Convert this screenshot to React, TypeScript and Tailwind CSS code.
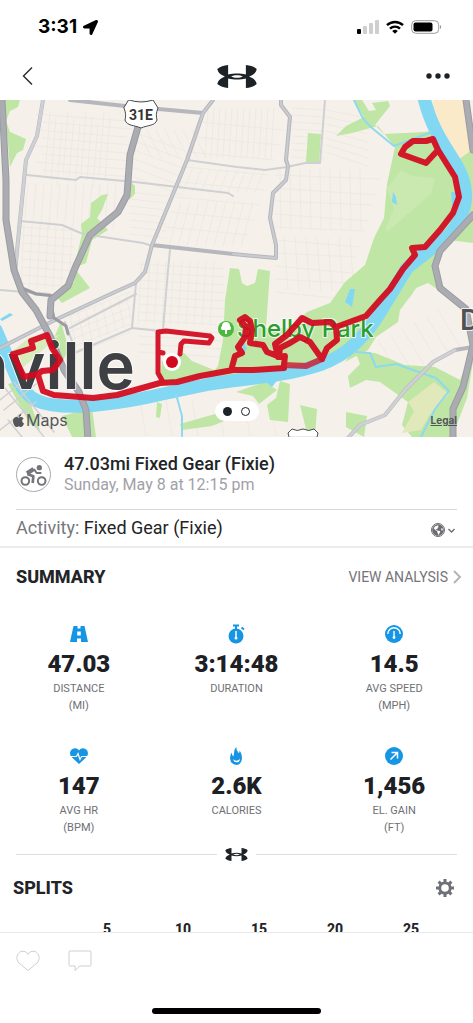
import { ReactNode } from "react";
import { FaApple, FaGlobeAmericas, FaLocationArrow } from "react-icons/fa";

type Stat = {
  icon: ReactNode;
  value: string;
  label: string;
  unit?: string;
};

const SPLIT_TICKS = [5, 10, 15, 20, 25];

// side streets of the east side grid, generated so the path list stays short
const SIDE_STREETS = [
  ...Array.from({ length: 11 }, (_, i) => `M${50 + i * 6} ${12 + (i % 3) * 6}l-5 62`),
  ...Array.from({ length: 8 }, (_, i) => `M${36 + (i % 2) * 6} ${14 + i * 8}l90 7`),
  ...Array.from({ length: 12 }, (_, i) => `M${28 + i * 8} 84l-3 ${34 + (i % 4) * 4}`),
  ...Array.from({ length: 8 }, (_, i) => `M${22} ${127 + i * 8}l52 4`),
  ...Array.from({ length: 7 }, (_, i) => `M${24 + i * 8} 125l-3 64`),
  ...Array.from({ length: 7 }, (_, i) => `M${138 + i * 9} 30l14 28`),
  ...Array.from({ length: 6 }, (_, i) => `M134 ${32 + i * 9}l48 18`),
  ...Array.from({ length: 7 }, (_, i) => `M130 ${92 + i * 7}l36 4`),
  ...Array.from({ length: 9 }, (_, i) => `M${192 + i * 9} 70l-9 22m-2 10l-12 44`),
  ...Array.from({ length: 8 }, (_, i) => `M${200 - i * 5} ${22 + i * 15}l84 8`),
  ...Array.from({ length: 12 }, (_, i) => `M${208 + i * 6} 8l-3 50`),
  ...Array.from({ length: 9 }, (_, i) => `M${280 + i * 10} 70l1 60`),
  ...Array.from({ length: 10 }, (_, i) => `M275 ${75 + i * 13}l${105 - i * 4} ${4 + (i % 2) * 3}`),
  ...Array.from({ length: 7 }, (_, i) => `M${284 + i * 11} 138l4 52`),
  ...Array.from({ length: 8 }, (_, i) => `M292 ${8 + i * 7}l32 2`),
  ...Array.from({ length: 7 }, (_, i) => `M${326} ${10 + i * 7}l42 ${8 + i}`),
  ...Array.from({ length: 10 }, (_, i) => `M${142 + i * 8} 162l-4 62`),
  ...Array.from({ length: 12 }, (_, i) => `M138 ${164 + i * 8}l86 5`),
  ...Array.from({ length: 8 }, (_, i) => `M${70 + i * 8} ${216 - i * 3}l6 30`),
  ...Array.from({ length: 6 }, (_, i) => `M70 ${256 - i * 8}l60 -24`),
  ...Array.from({ length: 6 }, (_, i) => `M${140 + i * 26} 300l6 36`),
  ...Array.from({ length: 6 }, (_, i) => `M${378 + i * 12} ${240 - i * 6}l24 40`),
].join("");

function ArmourLogo({ className }: { className?: string }) {
  return (
    <svg viewBox="0 0 120 70" className={className} fill="#1d2226" aria-hidden="true">
      <path
        fillRule="evenodd"
        d="M33 0C20 1 8 5 0 12c2 11 10 18 22 22v2C10 40 3 46 0 58c8 7 20 11 33 12V41c8 2 18 3 27 3s19-1 27-3v29c13-1 25-5 33-12-3-12-10-18-22-22v-2c12-4 20-11 22-22C112 5 100 1 87 0v29c-8-2-18-3-27-3s-19 1-27 3zm9 35c5-3 11-4 18-4s13 1 18 4c-5 3-11 4-18 4s-13-1-18-4z"
      />
    </svg>
  );
}

function StatusBar() {
  return (
    <div className="flex h-[50px] items-center justify-between pr-[31px] pl-[38px] pt-1">
      <div className="flex items-center gap-1.5">
        <span className="font-[Inter] text-[19px] font-bold">3:31</span>
        <FaLocationArrow className="size-[15px]" />
      </div>
      <div className="flex items-center gap-[7px]">
        <svg viewBox="0 0 22 14" className="h-[14px] w-[22px]">
          <rect x="0" y="9" width="4" height="5" rx="1" fill="#000" />
          <rect x="6" y="6" width="4" height="8" rx="1" fill="#cfcfcf" />
          <rect x="12" y="3" width="4" height="11" rx="1" fill="#cfcfcf" />
          <rect x="18" y="0" width="4" height="14" rx="1" fill="#cfcfcf" />
        </svg>
        <svg viewBox="0 0 18 14" className="h-[14px] w-[18px]" fill="none" stroke="#000" strokeWidth="2.4">
          <path d="M1 5.2a11.5 11.5 0 0 1 16 0" />
          <path d="M4 8.6a7.2 7.2 0 0 1 10 0" />
          <path d="M6.2 11a4 4 0 0 1 5.6 0L9 13.8z" fill="#000" stroke="none" />
        </svg>
        <svg viewBox="0 0 31 14" className="h-[14px] w-[31px]">
          <rect x=".7" y=".7" width="27" height="12.6" rx="4" fill="#fff" stroke="#9b9b9b" />
          <rect x="2.5" y="2.5" width="19" height="9" rx="2" />
          <path d="M29 5c1.5.4 1.5 3.6 0 4z" fill="#9b9b9b" />
        </svg>
      </div>
    </div>
  );
}

function NavBar() {
  return (
    <header className="grid h-[50px] grid-cols-3 items-center px-[22px] pt-0.5">
      <button aria-label="Back" className="justify-self-start">
        <svg viewBox="0 0 11 20" className="h-5 w-[11px]" fill="none" stroke="#26292c" strokeWidth="1.4">
          <path d="M10 1.5L1.5 10l8.5 8.5" />
        </svg>
      </button>
      <ArmourLogo className="h-[23px] w-10 justify-self-center" />
      <button aria-label="More options" className="justify-self-end">
        <svg viewBox="0 0 26 6" className="h-[6px] w-[26px]" fill="#1d2226">
          <circle cx="4" cy="3" r="2.7" />
          <circle cx="13" cy="3" r="2.7" />
          <circle cx="22" cy="3" r="2.7" />
        </svg>
      </button>
    </header>
  );
}

function RouteMap() {
  return (
    <svg
      viewBox="0 0 473 337"
      preserveAspectRatio="xMidYMid slice"
      className="block h-[337px] w-full"
      role="img"
      aria-label="Route map"
      fill="none"
      strokeLinejoin="round"
      strokeLinecap="round"
    >
      <rect width="473" height="337" fill="#f5f1ea" />
      <path d={SIDE_STREETS} stroke="#ebe7e1" strokeWidth="1" opacity=".8" />

      {/* parks */}
      <g fill="#bfe6a4">
        <path d="M4 0h16l-2 7-8 4-4 10 4 11 16 7-3 11-6 3-7 14z" />
        <path d="M102 95L108 94L102 110L97 118L108 130L92 140L86 163L74 168L82 134L81 124L90 117L91 103z" />
        <path d="M131 82l4 4v8l-6 6z" />
        <path d="M76 170L90 188L62 203L56 196L74 182zM61 222l8 28-6 10-10-20z" />
        <path d="M353 0L362 0L369 11L376 10L372 3L388 1L390 6L375 25L384 34L425 32L436 30L450 52L466 90L464 116L446 138L404 172L376 222L340 258L290 275L205 282L218 266L223 240L225 200L230 168L239 169L242 183L247 186L255 183L258 169L270 171L266 228L290 228L307 212L330 203L345 182L365 165L374 138L384 118L387 84L395 47L378 26L352 33L336 36L346 26L364 17z" />
        <path d="M160 283l2-22 22-8 8 8 22 9v6zM308 33l13 1-2 29-13-1z" />
        <path d="M459 55L473 45V143L448 140L428 168L412 194L400 210L398 222L376 237L368 250L345 262L375 220L410 170L455 135L466 110z" />
        <path d="M428 165L436 160L438 180L448 192L440 191L428 183L416 188L408 200z" />
        <path d="M355 251L375 253L405 265L435 267L460 280L468 260L473 262L467 298L452 337H412L402 325L408 302L380 282L366 280L350 288L348 276L360 264z" />
        <path d="M280 281l10 3-2 38-18-2-3-15 9-7zM300 305l17 4-2 28h-7zM346 312l21 4-3 21-18-10zM236 292l29-10 12 8-18 14-6-8zM157 302l5 2-2 14-4-1zM180 324l42-12 20 2-30 12-30 4zM62 316l30-8 4 29H72zM8 284l14-4 18 50-10-6z" />
      </g>
      <path d="M387 88l14-18 12 6 22 2-4 16-44 38-2-3 9-20z" fill="#cae9b1" />
      <path d="M433 0h30l9 50-14 10-8-14-17-30z" fill="#faeaca" />
      <path d="M408 302l26-20 15 12-20 22-8 14-19 3 12-22z" fill="#e1e9bb" />
      <path d="M20 270l40-35-30 2-20 16zM12 305l40 12" fill="#d8ebbb" />

      {/* river, lakes and creeks */}
      <path
        d="M424 -2C432 30 444 44 457 66C472 92 466 114 450 134L407 168L376 219C360 242 344 256 322 264C280 278 244 278 210 284C160 294 126 304 84 306C40 308 26 300 16 276C8 258 2 244 -4 230"
        stroke="#82d7f3"
        strokeWidth="13"
      />
      <path d="M0 219l10-6 3 2-11 6z" fill="#82d7f3" />
      <path d="M451 92h8l-2 14h-5zM393 92l3 5 1 8-5-3zM350 189h5l-3 18-7-5zM264 281l14-2-6 8zM243 242l4 6-4 6z" fill="#82d7f3" />
      <path d="M356 252l14 1 6 14 20-3 40 14 13 13-14 18-15 30" stroke="#8ed9ee" strokeWidth="2" />
      <path d="M354 0c6 12 8 20 18 28l22 18 38-14M176 294l6 22v20" stroke="#8ed9ee" strokeWidth="2" />

      {/* secondary roads */}
      <g stroke="#d0d0d3" strokeWidth="2">
        <path d="M27 75l49 5 4-3 55 5 93 11 5 3M20 121l42 4 21 9 60 9 9 3M187 60l50 7 28 3 22-3 18-4h15l5-63M170 150l-2 20-5 60M136 183l-4 45 28 3M132 228l-60 26M65 222l8 22M0 190l50 4M70 228l66-34" />
        <path d="M0 300l30-24M4 310l32-26M8 320l14 17M0 282l44 55M14 282l40 50M0 330l36-28" strokeWidth="1.5" />
      </g>
      <g>
        <path d="M70 0l55 6 78 7M43 0l-6 36-11 24-6 60-5 52M213 0l-10 13-16 47-35 85-7 27-10 11-20 9-60 28-55 28M152 145l81 9 43 4v-13l-6-27 3-25 13-13 2-14-2-6 4-43-9-12v-5M473 247l-18 3-22 12-28 28-20 25-25 10-13 14" stroke="#b5b7bd" strokeWidth="4" />
        <path d="M43 0l-6 36-11 24-6 60-5 52M455 250l-22 12-28 28-20 25-25 10-13 14" stroke="#ced0d3" strokeWidth="3" />
        <path d="M213 0l-10 13-16 47-35 85-7 27-10 11-20 9-60 28-55 28M233 154l43 4v-13l-6-27 3-25 13-13 2-14-2-6 4-43-9-12v-5" stroke="#cacbd0" strokeWidth="2" />
      </g>

      {/* highways */}
      <g stroke="#9a9ca2" strokeWidth="7">
        <path d="M2 0l4 80v40l8 50 8 22 14 18 14 26 14 34 15 22 7 18 2 30" />
        <path d="M138 27l-8 28-3 40-9 17-28 23-15 33-7 18-17 14-1 16" />
        <path d="M22 188l14 6 18 2M50 200l4 18 12 8 2 8" strokeWidth="3" />
        <path d="M466 0l7 50M473 115l-33 36-5 15 5 22 26 21 7 36-10 42-10 22v28" />
      </g>
      <g stroke="#aaacb2" strokeWidth="5">
        <path d="M2 0l4 80v40l8 50 8 22 14 18 14 26 14 34 15 22 7 18 2 30" />
        <path d="M138 27l-8 28-3 40-9 17-28 23-15 33-7 18-17 14-1 16" />
        <path d="M466 0l7 50M473 115l-33 36-5 15 5 22 26 21 7 36-10 42-10 22v28" />
      </g>

      {/* shields */}
      <path d="M129 0q12 4 24 0l5 8c-2 5-2 8-1 12-2 6-9 5-16 8-7-3-14-2-16-8 1-4 1-7-1-12z" fill="#fff" stroke="#4b4b4d" />
      <text x="141" y="20" textAnchor="middle" fill="#333436" fontFamily="Roboto, sans-serif" fontSize="14" fontWeight="700">
        31E
      </text>
      <path d="M289 337l-1-4 4-4q5 3 11 0 6 3 11 0l4 4-1 4z" fill="#fff" stroke="#4b4b4d" />

      {/* place names */}
      <g fontFamily="Inter, sans-serif" stroke="#fff" strokeOpacity=".8" paintOrder="stroke">
        <text x="135" y="289" textAnchor="end" fontSize="65" fontWeight="600" fill="#3f4043" strokeWidth="2">
          Nashville
        </text>
        <text x="237" y="237" fontSize="24" fontWeight="500" fill="#2b9d30" strokeWidth="2">
          Shelby Park
        </text>
        <text x="460" y="230" fontSize="28" fontWeight="600" fill="#505154" strokeWidth="2">
          D
        </text>
      </g>
      <circle cx="226" cy="229" r="8" fill="#4db83f" />
      <path d="M225 234v-4h-3a2.5 2.5 0 0 1 0-4 4 4 0 0 1 8 0 2.5 2.5 0 0 1 0 4h-3v4z" fill="#fff" />

      {/* ride */}
      <g stroke="#d3091f" strokeWidth="6" opacity=".93">
        <path d="M38 275l5 16 11 4 39 3 24-3 43-12 17-1 23-6 33-6 20 0 31-2" />
        <path d="M38 274L24 277L13 254L33 248L31 241L47 235L52 248L60 260L53 270L42 271z" />
        <path d="M163 282l-5-9V232l8-1 44 5 2 2-3 5-25-2-3 3-1 10M158 252l5 1" strokeWidth="5" />
        <path d="M284 265l22 1 16-7" strokeOpacity=".8" />
        <path d="M232 267L235 256L242 253L238 247L245 237L246 227L240 220L245 217L250 221L252 230L250 243L263 245L267 252L280 257L285 256L284 265M278 257L275 244L287 235L302 218L312 223L330 222L336 227L337 240L327 248L322 259L310 242L300 237L290 243L280 248L279 257" />
        <path d="M336 227L355 220L366 216L380 200L390 189L403 169L415 155L412 148L425 147L440 130L453 113L459 97L455 77L438 50L433 39L426 41L413 41L405 47L401 54L426 63L438 50" />
      </g>
      <circle cx="172" cy="262" r="9" fill="#fff" />
      <circle cx="172" cy="262" r="6" fill="#d3091f" />
    </svg>
  );
}

function MapCard() {
  return (
    <section className="relative">
      <RouteMap />
      <div className="absolute inset-x-0 bottom-[7px] flex items-end justify-between pr-4 pl-[11px] text-[#55565a]">
        <span className="flex items-center font-[Inter] text-base leading-5">
          <FaApple className="size-[15px]" />
          Maps
        </span>
        <a href="#legal" className="font-[Inter] text-[10px] font-bold leading-5 underline">
          Legal
        </a>
      </div>
      <div className="absolute inset-x-0 bottom-4 flex justify-center">
        <div className="flex h-5 w-11 items-center justify-center gap-[9px] rounded-full bg-white">
          <button aria-label="Map" className="size-[9px] rounded-full bg-[#1d2226]" />
          <button aria-label="Photos" className="size-[9px] rounded-full border border-[#1d2226]" />
        </div>
      </div>
    </section>
  );
}

const roadIcon = (
  <svg viewBox="0 0 18 18" className="size-[18px]" fill="#1595e4">
    <path fillRule="evenodd" d="M3.5 1H7.5V3.5H10.5V1H14.5L18 17H11V13.5H7V17H0zM7.2 6.5V10.5H10.8V6.5z" />
  </svg>
);

const stopwatchIcon = (
  <svg viewBox="0 0 18 20" className="h-5 w-[18px]">
    <circle cx="9" cy="12" r="7.5" fill="#1595e4" />
    <path d="M6 1.5h6M9 2v4M14.5 3.5l2.5 2" stroke="#1595e4" strokeWidth="2" />
    <path d="M9 7v6" stroke="#fff" strokeWidth="1.5" />
    <circle cx="9" cy="14" r="1.5" fill="#fff" />
  </svg>
);

const speedIcon = (
  <svg viewBox="0 0 18 18" className="size-[18px]" fill="none" stroke="#fff" strokeWidth="1.4">
    <circle cx="9" cy="9" r="9" fill="#1595e4" stroke="none" />
    <path d="M2.8 9a6.2 6.2 0 0 1 12.4 0M9 6v6" />
    <circle cx="9" cy="12.5" r="1.4" fill="#fff" stroke="none" />
  </svg>
);

const heartRateIcon = (
  <svg viewBox="0 0 18 16" className="h-4 w-[18px]">
    <path d="M9 16L1.5 9C-.8 6.5-.2 2.5 2.5 1 5-.3 7.5.4 9 2.5 10.5.4 13-.3 15.5 1c2.7 1.5 3.3 5.5 1 8z" fill="#1595e4" />
    <path d="M1 8.5h5.5L8 5.5l2 6 1.5-3H17" fill="none" stroke="#fff" strokeWidth="1.2" />
  </svg>
);

const flameIcon = (
  <svg viewBox="0 0 14 20" className="h-[18px] w-[13px]">
    <path d="M7 0c-.5 4 1.5 5 2.5 7 .8-1 1-2 .8-3.2C14 8 15 19 7 20-2 19-1 9 2 6c-.3 2 .2 3.5 1.5 4.5C5 7 3.500 3 7 0z" fill="#1595e4" />
    <path d="M3.5 13c1 2 3 2.5 4.5 2 1.5-.4 2.2-1.2 2.8-2.3.2 3-1.5 4.3-3.8 4.3S3.5 15.5 3.5 13z" fill="#fff" />
  </svg>
);

const gainIcon = (
  <svg viewBox="0 0 18 18" className="size-[18px]" fill="none" stroke="#fff" strokeWidth="1.5">
    <circle cx="9" cy="9" r="9" fill="#1595e4" stroke="none" />
    <path d="M5.5 12.5l7-7M6.5 5.5h6v6" />
  </svg>
);

const stats: Stat[] = [
  { icon: roadIcon, value: "47.03", label: "DISTANCE", unit: "(MI)" },
  { icon: stopwatchIcon, value: "3:14:48", label: "DURATION" },
  { icon: speedIcon, value: "14.5", label: "AVG SPEED", unit: "(MPH)" },
  { icon: heartRateIcon, value: "147", label: "AVG HR", unit: "(BPM)" },
  { icon: flameIcon, value: "2.6K", label: "CALORIES" },
  { icon: gainIcon, value: "1,456", label: "EL. GAIN", unit: "(FT)" },
];

function CyclistIcon() {
  return (
    <svg viewBox="0 0 81 66" className="h-[22px] w-[27px]" fill="none" stroke="#74747a" strokeLinejoin="round">
      <circle cx="16" cy="51" r="11.5" strokeWidth="6" />
      <circle cx="65" cy="51" r="11.5" strokeWidth="6" />
      <circle cx="58" cy="11" r="8" fill="#74747a" stroke="none" />
      <path d="M21 28L41 15" strokeWidth="13" />
      <path d="M42 15l8 12h14" strokeWidth="6" />
      <path d="M22 30l18 7-2 20" strokeWidth="8" />
    </svg>
  );
}

function WorkoutHeader() {
  return (
    <section className="border-b-2 border-[#ececec] px-4 pt-4">
      <div className="flex h-14 items-start gap-[13px]">
        <div className="mt-1 flex size-[35px] items-center justify-center rounded-full border border-[#a9a9ac]">
          <CyclistIcon />
        </div>
        <div>
          <h1 className="text-lg font-medium leading-[22px] text-[#222427]">
            47.03mi Fixed Gear (Fixie)
          </h1>
          <p className="text-base leading-5 text-[#a2a1a9]">Sunday, May 8 at 12:15 pm</p>
        </div>
      </div>
      <div className="flex h-[37px] items-center justify-between border-t border-[#d9d9db] text-lg">
        <p className="text-[#222427]">
          <span className="text-[#77777c]">Activity:</span> Fixed Gear (Fixie)
        </p>
        <button aria-label="Privacy: public" className="flex items-center gap-[3px] pt-1 pr-0.5 text-[#6b6b70]">
          <span className="rounded-full border border-current">
            <FaGlobeAmericas className="size-3" />
          </span>
          <svg viewBox="0 0 7 5" className="h-[5px] w-[7px]" fill="none" stroke="currentColor" strokeWidth="1.3">
            <path d="M.5 1l3 3 3-3" />
          </svg>
        </button>
      </div>
    </section>
  );
}

function Summary() {
  return (
    <section>
      <div className="flex h-[58px] items-center justify-between pr-[11px] pl-4">
        <h2 className="text-lg font-extrabold text-[#222427]">SUMMARY</h2>
        <a href="#analysis" className="flex items-center gap-[5px] text-sm text-[#74757a]">
          VIEW ANALYSIS
          <svg viewBox="0 0 9 14" className="h-[14px] w-[9px]" fill="none" stroke="#b5b5b8" strokeWidth="2">
            <path d="M1 1l6 6-6 6" />
          </svg>
        </a>
      </div>
      <dl className="grid grid-cols-3 gap-y-8 pt-[18px] text-center">
        {stats.map((stat) => (
          <div key={stat.label} className="flex h-[90px] flex-col items-center">
            <div className="flex h-5 items-center">{stat.icon}</div>
            <dd className="mt-1.5 text-2xl font-black leading-7 text-[#1d2024]">{stat.value}</dd>
            <dt className="order-last mt-0.5 text-[11px] leading-[17px] text-[#6f7074]">
              {stat.label}
              {stat.unit && <span className="block">{stat.unit}</span>}
            </dt>
          </div>
        ))}
      </dl>
    </section>
  );
}

function Splits() {
  return (
    <section>
      <div className="flex h-8 items-center justify-between pr-[19px] pl-[13px]">
        <h2 className="text-lg font-extrabold text-[#222427]">SPLITS</h2>
        <button aria-label="Split settings">
          <svg viewBox="0 0 18 18" className="size-[18px]" fill="none" stroke="#6f7078">
            <circle cx="9" cy="9" r="5.2" strokeWidth="2.8" />
            <path d="M9 0v4M9 14v4M0 9h4M14 9h4M2.6 2.6l2.8 2.8M12.6 12.6l2.8 2.8M15.4 2.6l-2.8 2.8M5.4 12.6l-2.8 2.8" strokeWidth="3" />
          </svg>
        </button>
      </div>
      <div className="grid grid-cols-5 pt-[15px] pr-6 pl-[69px] text-center text-sm font-extrabold leading-5 text-[#222427]">
        {SPLIT_TICKS.map((mile) => (
          <span key={mile}>{mile}</span>
        ))}
      </div>
    </section>
  );
}

function ActionBar() {
  return (
    <footer className="flex h-[91px] shrink-0 flex-col justify-between border-t border-[#e9e9e9] bg-white pb-[9px]">
      <div className="flex items-center gap-7 px-4 pt-[17px]">
        <button aria-label="Like">
          <svg viewBox="0 0 24 22" className="h-[22px] w-6" fill="none" stroke="#cfcfcf">
            <path d="M12 20.5L3 13C-.5 9.5.5 3 5 1.500 8 .6 11 2 12 4.500 13 2 16 .6 19 1.500c4.500 1.500 5.500 8 2 11.500z" />
          </svg>
        </button>
        <button aria-label="Comment">
          <svg viewBox="0 0 24 22" className="h-[22px] w-6" fill="none" stroke="#cfcfcf">
            <path d="M2 1h20a1 1 0 0 1 1 1v13a1 1 0 0 1-1 1H12l-5 4.500V16H2a1 1 0 0 1-1-1V2a1 1 0 0 1 1-1z" />
          </svg>
        </button>
      </div>
      <div className="h-[6px] w-[169px] self-center rounded-full bg-black" />
    </footer>
  );
}

export default function App() {
  return (
    <div className="flex h-screen flex-col bg-white font-[Roboto,sans-serif] text-black">
      <main className="min-h-0 flex-1 overflow-hidden">
        <StatusBar />
        <NavBar />
        <MapCard />
        <WorkoutHeader />
        <Summary />
        <div className="flex h-9 items-center gap-2 px-4">
          <div className="h-px flex-1 bg-[#dedede]" />
          <ArmourLogo className="h-[13px] w-[23px]" />
          <div className="h-px flex-1 bg-[#dedede]" />
        </div>
        <Splits />
      </main>
      <ActionBar />
    </div>
  );
}
